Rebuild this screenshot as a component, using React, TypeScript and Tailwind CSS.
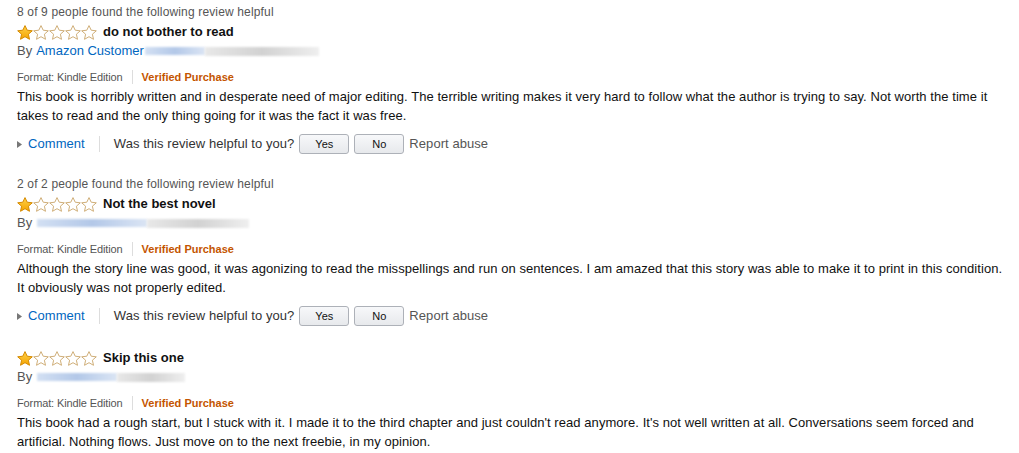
import React from 'react';

type Review = {
  helpful?: string;
  title: string;
  author?: string;
  blur: { blue: number; gray: number };
  body: string;
  actions: boolean;
};

const REVIEWS: Review[] = [
  {
    helpful: '8 of 9 people found the following review helpful',
    title: 'do not bother to read',
    author: 'Amazon Customer',
    blur: { blue: 60, gray: 114 },
    body: 'This book is horribly written and in desperate need of major editing. The terrible writing makes it very hard to follow what the author is trying to say. Not worth the time it takes to read and the only thing going for it was the fact it was free.',
    actions: true,
  },
  {
    helpful: '2 of 2 people found the following review helpful',
    title: 'Not the best novel',
    blur: { blue: 110, gray: 102 },
    body: 'Although the story line was good, it was agonizing to read the misspellings and run on sentences. I am amazed that this story was able to make it to print in this condition. It obviously was not properly edited.',
    actions: true,
  },
  {
    title: 'Skip this one',
    blur: { blue: 80, gray: 68 },
    body: "This book had a rough start, but I stuck with it. I made it to the third chapter and just couldn't read anymore. It's not well written at all. Conversations seem forced and artificial. Nothing flows. Just move on to the next freebie, in my opinion.",
    actions: false,
  },
];

function Star({ filled }: { filled: boolean }) {
  return (
    <svg width="16" height="15" viewBox="0 0 16 15" className="block">
      <defs>
        <linearGradient id="gold" x1="0" y1="0" x2="0" y2="1">
          <stop offset="0" stopColor="#ffd24a" />
          <stop offset="1" stopColor="#f4a300" />
        </linearGradient>
      </defs>
      <path
        d="M8 0.6 L10.2 5.2 L15.3 5.8 L11.4 9.2 L12.5 14.3 L8 11.7 L3.5 14.3 L4.6 9.2 L0.7 5.8 L5.8 5.2 Z"
        fill={filled ? 'url(#gold)' : '#ffffff'}
        stroke={filled ? '#d58a00' : '#cfae78'}
        strokeWidth="1"
        strokeLinejoin="round"
      />
    </svg>
  );
}

function Stars() {
  return (
    <div className="flex">
      {[0, 1, 2, 3, 4].map((i) => (
        <Star key={i} filled={i === 0} />
      ))}
    </div>
  );
}

function Blur({ blue, gray }: { blue: number; gray: number }) {
  return (
    <span className="inline-flex items-center h-[10px] ml-[1px]">
      <span
        className="h-[8px] bg-gradient-to-r from-[#d3e0f3] via-[#b3c8e8] to-[#dbe5f4] blur-[1px]"
        style={{ width: blue }}
      />
      <span
        className="h-[9px] bg-gradient-to-r from-[#e8e8e8] via-[#d2d2d2] to-[#efefef] blur-[1px]"
        style={{ width: gray }}
      />
    </span>
  );
}

function ReviewBlock({ r }: { r: Review }) {
  return (
    <div className="flex flex-col">
      {r.helpful && (
        <div className="text-[12px] leading-[18px] text-[#555] tracking-[0.15px]">{r.helpful}</div>
      )}
      <div className="flex items-center gap-[6px] h-[20px] mt-[1px]">
        <Stars />
        <span className="text-[13px] font-bold text-[#111]">{r.title}</span>
      </div>
      <div className="flex items-center text-[13px] leading-[18px] text-[#555] h-[18px]">
        <span className="mr-[4px]">By</span>
        {r.author && <span className="text-[#0066c0]">{r.author}</span>}
        <Blur blue={r.blur.blue} gray={r.blur.gray} />
      </div>
      <div className="flex items-center text-[11px] leading-[16px] mt-[9px]">
        <span className="text-[#555] tracking-[-0.12px]">Format: Kindle Edition</span>
        <span className="w-px h-[14px] bg-[#ddd] mx-[9px]" />
        <span className="text-[#c45500] font-bold">Verified Purchase</span>
      </div>
      <p className="text-[13px] leading-[19px] text-[#111] mt-[2px] tracking-[0.06px]">{r.body}</p>
      {r.actions && (
        <div className="flex items-center text-[13px] h-[22px] mt-[8px] tracking-[0.06px]">
          <svg width="5" height="7" viewBox="0 0 5 7" className="mr-[6px]">
            <path d="M0 0 L5 3.5 L0 7 Z" fill="#777" />
          </svg>
          <span className="text-[#0066c0]">Comment</span>
          <span className="w-px h-[16px] bg-[#ddd] mx-[14px]" />
          <span className="text-[#333]">Was this review helpful to you?</span>
          <button className="ml-[5px] w-[50px] h-[20px] rounded-[3px] border border-[#adb1b8] bg-gradient-to-b from-[#f7f8fa] to-[#e7e9ec] text-[11px] text-[#111]">
            Yes
          </button>
          <button className="ml-[5px] w-[50px] h-[20px] rounded-[3px] border border-[#adb1b8] bg-gradient-to-b from-[#f7f8fa] to-[#e7e9ec] text-[11px] text-[#111]">
            No
          </button>
          <span className="ml-[5px] text-[#555]">Report abuse</span>
        </div>
      )}
    </div>
  );
}

export default function App() {
  return (
    <div
      className="w-[1019px] h-[453px] bg-white pl-[17px] pr-[10px] pt-[3px] overflow-hidden flex flex-col gap-[20px]"
      style={{ fontFamily: '"Liberation Sans", Arial, sans-serif' }}
    >
      {REVIEWS.map((r, i) => (
        <ReviewBlock key={i} r={r} />
      ))}
    </div>
  );
}
